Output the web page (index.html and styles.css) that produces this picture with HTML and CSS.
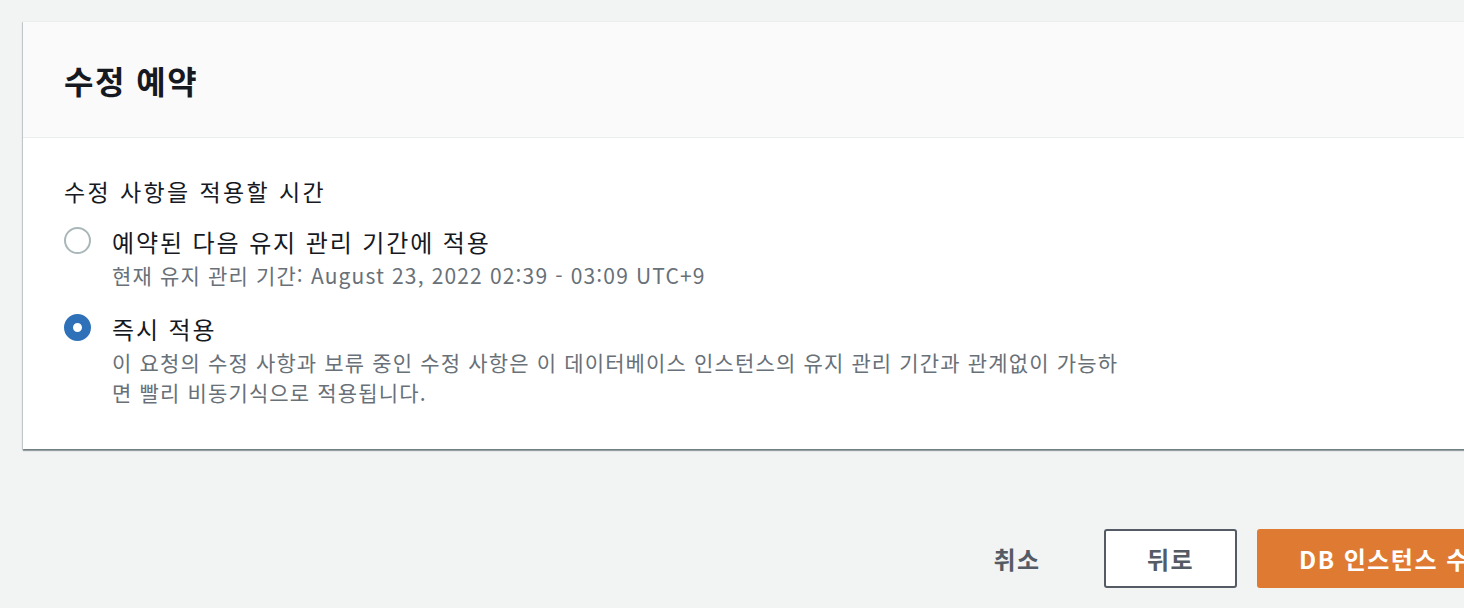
FILE: index.html
```html
<!DOCTYPE html>
<html lang="ko">
<head>
<meta charset="utf-8">
<link rel="stylesheet" href="styles.css">
</head>
<body>
<div class="page">
  <section class="card">
    <header class="card-header">
      <h2 class="card-title">수정 예약</h2>
    </header>
    <div class="card-body">
      <div class="field-label">수정 사항을 적용할 시간</div>
      <div class="options">
        <label class="option">
          <span class="radio"></span>
          <span class="option-text">
            <span class="option-title">예약된 다음 유지 관리 기간에 적용</span>
            <span class="option-desc">현재 유지 관리 기간: August 23, 2022 02:39 - 03:09 UTC+9</span>
          </span>
        </label>
        <label class="option">
          <span class="radio checked"></span>
          <span class="option-text">
            <span class="option-title">즉시 적용</span>
            <span class="option-desc">이 요청의 수정 사항과 보류 중인 수정 사항은 이 데이터베이스 인스턴스의 유지 관리 기간과 관계없이 가능하<br>면 빨리 비동기식으로 적용됩니다.</span>
          </span>
        </label>
      </div>
    </div>
  </section>
  <div class="actions">
    <button class="btn btn-link">취소</button>
    <button class="btn btn-normal">뒤로</button>
    <button class="btn btn-primary">DB 인스턴스 수정</button>
  </div>
</div>
</body>
</html>
```
FILE: styles.css
```css
html, body {
  margin: 0;
  padding: 0;
  background: #f2f3f3;
  overflow: hidden;
}
body {
  font-family: "Noto Sans CJK KR", "Noto Sans", sans-serif;
  color: #16191f;
}
.page {
  width: 1800px;
  padding: 21px 0 0 23px;
}
.card {
  background: #ffffff;
  box-shadow: 0 2px 1px 0 rgba(0, 28, 36, 0.35), 1px 1px 1px 0 rgba(0, 28, 36, 0.15), -1px 1px 1px 0 rgba(0, 28, 36, 0.15);
  border-top: 1px solid #eaeded;
}
.card-header {
  background: #fafafa;
  border-bottom: 1px solid #eaeded;
  height: 115px;
  display: flex;
  align-items: center;
  padding-left: 41px;
}
.card-title {
  margin: 0;
  font-size: 32px;
  font-weight: 700;
  line-height: 40px;
  letter-spacing: 1.5px;
}
.card-body {
  padding: 38px 0 42px 41px;
}
.field-label {
  font-size: 23px;
  line-height: 30px;
  letter-spacing: 2.4px;
}
.options {
  display: flex;
  flex-direction: column;
  gap: 23px;
  margin-top: 20px;
}
.option {
  display: flex;
  align-items: flex-start;
  gap: 21px;
}
.radio {
  flex: none;
  width: 27px;
  height: 27px;
  box-sizing: border-box;
  border: 2px solid #aab7b8;
  border-radius: 50%;
  margin-top: 1px;
  background: #fff;
}
.radio.checked {
  border: 9px solid #2f71b8;
}
.option-text {
  display: flex;
  flex-direction: column;
}
.option-title {
  font-size: 24px;
  line-height: 32px;
  letter-spacing: 1.9px;
}
.option-desc {
  font-size: 21px;
  line-height: 30px;
  color: #687078;
  letter-spacing: 1.15px;
  margin-top: 2px;
}
.actions {
  display: flex;
  align-items: center;
  margin-top: 80px;
  margin-left: 950px;
}
.btn {
  font-family: "Noto Sans CJK KR", "Noto Sans", sans-serif;
  font-size: 24px;
  font-weight: 700;
  height: 59px;
  border-radius: 3px;
  box-sizing: border-box;
  cursor: pointer;
  letter-spacing: 1.5px;
}
.btn-link {
  background: transparent;
  border: none;
  color: #545b64;
  width: 88px;
  margin-right: 43px;
}
.btn-normal {
  background: #ffffff;
  border: 2px solid #545b64;
  color: #545b64;
  width: 133px;
  margin-right: 20px;
}
.btn-primary {
  background: #df7a33;
  border: 2px solid #df7a33;
  color: #ffffff;
  padding: 0 40px;
}
```
